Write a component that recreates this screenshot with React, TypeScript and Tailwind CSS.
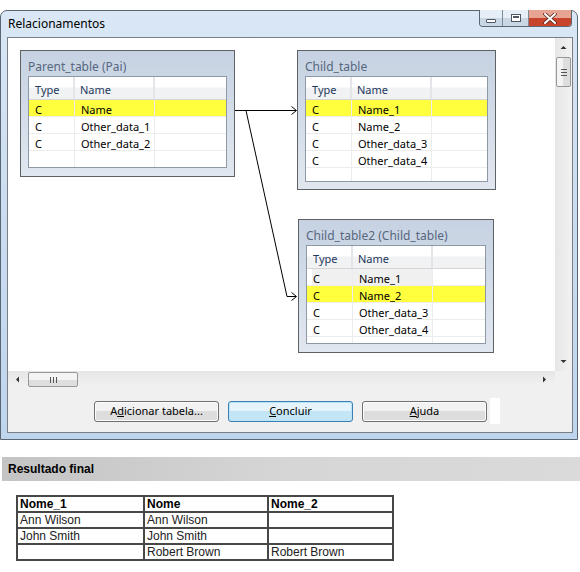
import React from "react";

type Row = { type: string; name: string; hl?: boolean; focus?: boolean };

const ui = "font-['Noto_Sans',sans-serif]";

function Grid({ rows, height }: { rows: Row[]; height: string }) {
  return (
    <div className={`flex flex-col overflow-hidden border border-[#8e99a7] bg-white ${height}`}>
      {/* header */}
      <div className="flex h-[23px] shrink-0 border-b border-[#d5d5d5] bg-linear-to-b from-white from-45% to-[#f1f2f4] to-50% pt-[6px] text-[11px] leading-[14px] text-[#1e395b]">
        <div className="-mt-[6px] w-[46px] border-r-2 border-r-[#e3e5e8] pl-[6px] pt-[6px]">Type</div>
        <div className="-mt-[6px] w-[80px] border-r-2 border-r-[#e3e5e8] pl-[5px] pt-[6px]">Name</div>
        <div className="flex-1" />
      </div>
      {rows.map((r) => (
        <div
          key={r.name}
          className={`flex h-[17px] shrink-0 overflow-hidden border-b border-[#ececec] text-[11px] leading-[13px] text-black ${
            r.hl ? "bg-[#ffff3e]" : ""
          }`}
        >
          <div className="w-[46px] border-r border-[#ececec]">
            <div className={`h-full pt-[3px] ${r.focus ? "ml-[5px] bg-[#f0f0f0] pl-[1px]" : "pl-[6px]"}`}>{r.type}</div>
          </div>
          <div className={`w-[80px] border-r border-[#ececec] pl-[6px] pt-[3px] ${r.focus ? "bg-[#f0f0f0]" : ""}`}>
            {r.name}
          </div>
          <div className="flex-1" />
        </div>
      ))}
      <div className="flex flex-1">
        <div className="w-[46px] border-r border-[#ececec]" />
        <div className="w-[80px] border-r border-[#ececec]" />
      </div>
    </div>
  );
}

function TablePanel({
  title,
  rows,
  pos,
  gridH,
}: {
  title: string;
  rows: Row[];
  pos: string;
  gridH: string;
}) {
  return (
    <div className={`absolute border border-[#5f6265] bg-linear-to-b from-[#c6d2e2] to-[#e1e7ef] px-[7px] ${pos}`}>
      <div className="h-[25px] pt-[9px] text-[12px] leading-[14px] text-[#56677e]">{title}</div>
      <Grid rows={rows} height={gridH} />
    </div>
  );
}

function Btn({ children, focus }: { children: React.ReactNode; focus?: boolean }) {
  return (
    <div
      className={`flex h-[21px] w-[125px] items-center justify-center rounded-[3px] border text-[11px] text-black ${
        focus
          ? "border-[#3c7fb1] bg-linear-to-b from-[#e5f4fc] from-50% to-[#c4e5f6] to-50% shadow-[inset_0_0_0_1px_#b8e3f8]"
          : "border-[#707070] bg-linear-to-b from-[#f2f2f2] from-50% to-[#dddddd] to-50% shadow-[inset_0_0_0_1px_#fcfcfc]"
      }`}
    >
      {children}
    </div>
  );
}

export default function App() {
  return (
    <div className={`h-[572px] w-[580px] overflow-hidden bg-white pt-[10px] ${ui}`}>
      {/* window */}
      <div className="flex h-[430px] w-[578px] flex-col rounded-t-[7px] border border-[#5b6673] bg-linear-to-b from-[#d9e7f6] via-[#cadcf0] to-[#bfd5ee] pb-[6px] pl-[6px] pr-[4px]">
        <div className="relative flex h-[26px] items-center pl-[1px] text-[12px] text-black">
          Relacionamentos
          <div className="absolute -top-px right-px flex h-[17px] overflow-hidden rounded-b-[4px] border border-t-0 border-[#5b6673]">
            <div className="flex w-[23px] items-center justify-center border-r border-[#7d8a9a] bg-linear-to-b from-[#e6eef7] from-50% to-[#c9d6e4] to-50%">
              <div className="mt-[5px] h-[4px] w-[10px] rounded-[1px] border border-[#4f5966] bg-white" />
            </div>
            <div className="flex w-[26px] items-center justify-center border-r border-[#7d8a9a] bg-linear-to-b from-[#e6eef7] from-50% to-[#c9d6e4] to-50%">
              <div className="h-[8px] w-[10px] border border-[#4f5966] bg-white p-[1px]">
                <div className="h-full w-full border-t-2 border-[#4f5966]" />
              </div>
            </div>
            <div className="flex w-[42px] items-center justify-center bg-linear-to-b from-[#e8a493] from-50% to-[#c7432c] to-50%">
              <svg width="14" height="11" viewBox="0 0 14 11">
                <path d="M2 1 L12 10 M12 1 L2 10" stroke="#5a2a20" strokeWidth="3.6" strokeLinecap="round" />
                <path d="M2 1 L12 10 M12 1 L2 10" stroke="#ffffff" strokeWidth="2" strokeLinecap="round" />
              </svg>
            </div>
          </div>
        </div>

        {/* client area */}
        <div className="flex flex-1 flex-col border border-[#7a7f86] bg-[#f0f0f0]">
          <div className="flex h-[350px]">
            <div className="flex flex-1 flex-col">
              <div className="relative flex-1 overflow-hidden bg-white">
                <TablePanel
                  title="Parent_table (Pai)"
                  pos="left-[12px] top-[12px] w-[215px] h-[127px]"
                  gridH="h-[92px]"
                  rows={[
                    { type: "C", name: "Name", hl: true },
                    { type: "C", name: "Other_data_1" },
                    { type: "C", name: "Other_data_2" },
                  ]}
                />
                <TablePanel
                  title="Child_table"
                  pos="left-[289px] top-[12px] w-[199px] h-[140px]"
                  gridH="h-[106px]"
                  rows={[
                    { type: "C", name: "Name_1", hl: true },
                    { type: "C", name: "Name_2" },
                    { type: "C", name: "Other_data_3" },
                    { type: "C", name: "Other_data_4" },
                  ]}
                />
                <TablePanel
                  title="Child_table2 (Child_table)"
                  pos="left-[290px] top-[181px] w-[196px] h-[134px]"
                  gridH="h-[99px]"
                  rows={[
                    { type: "C", name: "Name_1", focus: true },
                    { type: "C", name: "Name_2", hl: true },
                    { type: "C", name: "Other_data_3" },
                    { type: "C", name: "Other_data_4" },
                  ]}
                />
                {/* relationship lines */}
                <svg className="pointer-events-none absolute left-0 top-0" width="547" height="333">
                  <g stroke="#000" strokeWidth="1" fill="none" shapeRendering="crispEdges">
                    <path d="M227 72.5 H288" />
                    <path d="M238 72.5 L279 258.5 H288" shapeRendering="auto" />
                  </g>
                  <g stroke="#000" strokeWidth="1" fill="none">
                    <path d="M283.5 68.5 L288.5 72.5 L283.5 76.5" />
                    <path d="M283.5 254.5 L288.5 258.5 L283.5 262.5" />
                  </g>
                </svg>
              </div>
              {/* horizontal scrollbar */}
              <div className="flex h-[17px] items-center bg-linear-to-b from-[#e6e6e6] to-[#f2f2f2]">
                <svg width="20" height="17" viewBox="0 0 20 17">
                  <path d="M8 8.5 L11 5.5 V11.5 Z" fill="#333" />
                </svg>
                <div className="flex h-[15px] w-[50px] items-center justify-center rounded-[2px] border border-[#979797] bg-linear-to-b from-[#f4f4f4] from-50% to-[#dedede] to-50%">
                  <div className="flex gap-[2px]">
                    <div className="h-[6px] w-px bg-[#555]" />
                    <div className="h-[6px] w-px bg-[#555]" />
                    <div className="h-[6px] w-px bg-[#555]" />
                  </div>
                </div>
                <div className="flex-1" />
                <svg width="20" height="17" viewBox="0 0 20 17">
                  <path d="M11 8.5 L8 5.5 V11.5 Z" fill="#333" />
                </svg>
              </div>
            </div>
            {/* vertical scrollbar */}
            <div className="flex w-[17px] flex-col">
              <div className="flex flex-1 flex-col items-center bg-linear-to-r from-[#e6e6e6] to-[#f2f2f2]">
                <svg width="17" height="19" viewBox="0 0 17 19">
                  <path d="M8.5 8 L11.5 11 H5.5 Z" fill="#333" />
                </svg>
                <div className="flex h-[30px] w-[15px] items-center justify-center rounded-[2px] border border-[#979797] bg-linear-to-r from-[#f4f4f4] from-50% to-[#dedede] to-50%">
                  <div className="flex flex-col gap-[2px]">
                    <div className="h-px w-[6px] bg-[#555]" />
                    <div className="h-px w-[6px] bg-[#555]" />
                    <div className="h-px w-[6px] bg-[#555]" />
                  </div>
                </div>
                <div className="flex-1" />
                <svg width="17" height="19" viewBox="0 0 17 19">
                  <path d="M8.5 11 L11.5 8 H5.5 Z" fill="#333" />
                </svg>
              </div>
              <div className="h-[17px] bg-[#f0f0f0]" />
            </div>
          </div>

          {/* buttons */}
          <div className="flex items-start gap-[9px] pl-[86px] pt-[13px]">
            <Btn>
              A<span className="underline">d</span>icionar tabela...
            </Btn>
            <Btn focus>
              <span className="underline">C</span>oncluir
            </Btn>
            <Btn>
              <span className="underline">A</span>juda
            </Btn>
            <div className="-ml-[6px] -mt-[3px] h-[26px] w-[10px] bg-white" />
          </div>
        </div>
      </div>

      {/* result */}
      <div className="ml-[2px] mt-[17px] flex h-[24px] items-center bg-linear-to-r from-[#c4c4c4] via-[#d6d6d6] to-[#dadada] pl-[6px] font-['Liberation_Sans',Arial,sans-serif] text-[12px] font-bold text-black">
        Resultado final
      </div>
      <table className="ml-[16px] mt-[14px] border-collapse border-2 border-[#474747] font-['Liberation_Sans',Arial,sans-serif] text-[12px] leading-[14px] text-black">
        <tbody>
          {[
            ["Nome_1", "Nome", "Nome_2"],
            ["Ann Wilson", "Ann Wilson", ""],
            ["John Smith", "John Smith", ""],
            ["", "Robert Brown", "Robert Brown"],
          ].map((row, i) => (
            <tr key={i} className="h-[16px]">
              {row.map((c, j) => (
                <td
                  key={j}
                  className={`border-2 border-[#474747] p-0 pl-[2px] align-middle ${
                    j === 0 ? "w-[127px]" : j === 1 ? "w-[124px]" : "w-[125px]"
                  } ${i === 0 ? "font-bold" : "text-[#222]"}`}
                >
                  {c}
                </td>
              ))}
            </tr>
          ))}
        </tbody>
      </table>
    </div>
  );
}
